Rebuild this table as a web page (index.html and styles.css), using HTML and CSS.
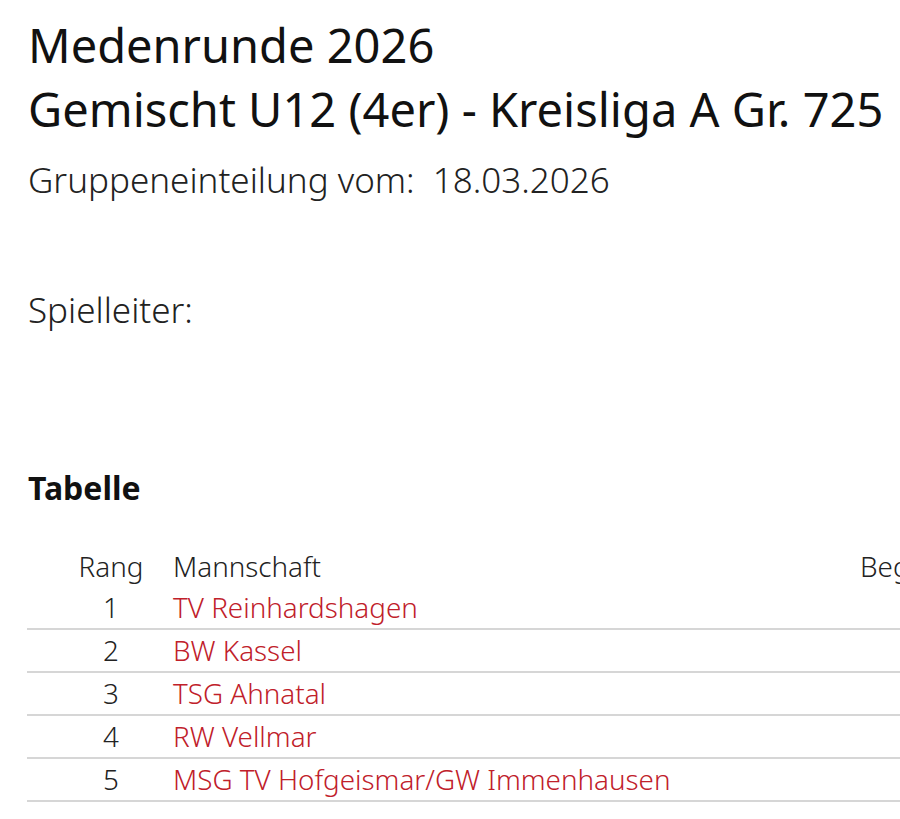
FILE: index.html
```html
<!DOCTYPE html>
<html lang="de">
<head>
<meta charset="utf-8">
<title>Medenrunde 2026</title>
<link rel="stylesheet" href="styles.css">
</head>
<body>
<div class="page">
  <h1 class="title">Medenrunde 2026<br>Gemischt U12 (4er) - Kreisliga A Gr. 725</h1>
  <p class="meta">Gruppeneinteilung vom:&nbsp; 18.03.2026</p>
  <p class="meta leader">Spielleiter:</p>
  <h2 class="section">Tabelle</h2>
  <div class="table-wrap">
    <table class="standings">
      <thead>
        <tr><th class="rank">Rang</th><th class="team">Mannschaft</th><th class="matches">Begegnungen</th><th class="num">S</th><th class="num">U</th><th class="num">N</th></tr>
      </thead>
      <tbody>
        <tr><td class="rank">1</td><td class="team"><a href="#">TV Reinhardshagen</a></td><td class="matches"></td><td class="num"></td><td class="num"></td><td class="num"></td></tr>
        <tr><td class="rank">2</td><td class="team"><a href="#">BW Kassel</a></td><td class="matches"></td><td class="num"></td><td class="num"></td><td class="num"></td></tr>
        <tr><td class="rank">3</td><td class="team"><a href="#">TSG Ahnatal</a></td><td class="matches"></td><td class="num"></td><td class="num"></td><td class="num"></td></tr>
        <tr><td class="rank">4</td><td class="team"><a href="#">RW Vellmar</a></td><td class="matches"></td><td class="num"></td><td class="num"></td><td class="num"></td></tr>
        <tr><td class="rank">5</td><td class="team"><a href="#">MSG TV Hofgeismar/GW Immenhausen</a></td><td class="matches"></td><td class="num"></td><td class="num"></td><td class="num"></td></tr>
      </tbody>
    </table>
  </div>
</div>
</body>
</html>
```
FILE: styles.css
```css
html, body {
  margin: 0;
  padding: 0;
  background: #fff;
}
body {
  font-family: "Noto Sans", "Open Sans", sans-serif;
  color: #1a1a1a;
  overflow: hidden;
}
.page {
  padding: 13px 0 0 28px;
}
.title {
  margin: 0;
  font-size: 47px;
  font-weight: 400;
  line-height: 64px;
  color: #111;
  white-space: nowrap;
}
.meta {
  margin: 0;
  font-size: 35px;
  font-weight: 300;
  line-height: 44px;
  color: #222;
  white-space: nowrap;
}
.title + .meta {
  margin-top: 17px;
}
.leader {
  margin-top: 86px;
}
.section {
  margin: 136px 0 0;
  font-size: 32px;
  font-weight: 700;
  line-height: 40px;
  color: #111;
}
.table-wrap {
  margin-top: 38px;
  margin-left: -1px;
  overflow: hidden;
}
.standings {
  border-collapse: separate;
  border-spacing: 0;
  table-layout: fixed;
  width: 1150px;
  font-size: 27.8px;
  color: #222;
}
.standings th,
.standings td {
  font-weight: 300;
  text-align: left;
  padding: 0;
  white-space: nowrap;
  overflow: hidden;
  vertical-align: middle;
}
.standings th {
  line-height: 41px;
}
.standings td {
  line-height: 41px;
  border-bottom: 2px solid #d6d6d6;
}
.standings .rank {
  width: 96px;
  padding-left: 36px;
  text-align: center;
}
.standings .team {
  width: 687px;
  padding-left: 14px;
}
.standings .matches {
  width: 200px;
}
.standings .num {
  width: 40px;
}
.standings a {
  color: #c0202a;
  text-decoration: none;
}
```
